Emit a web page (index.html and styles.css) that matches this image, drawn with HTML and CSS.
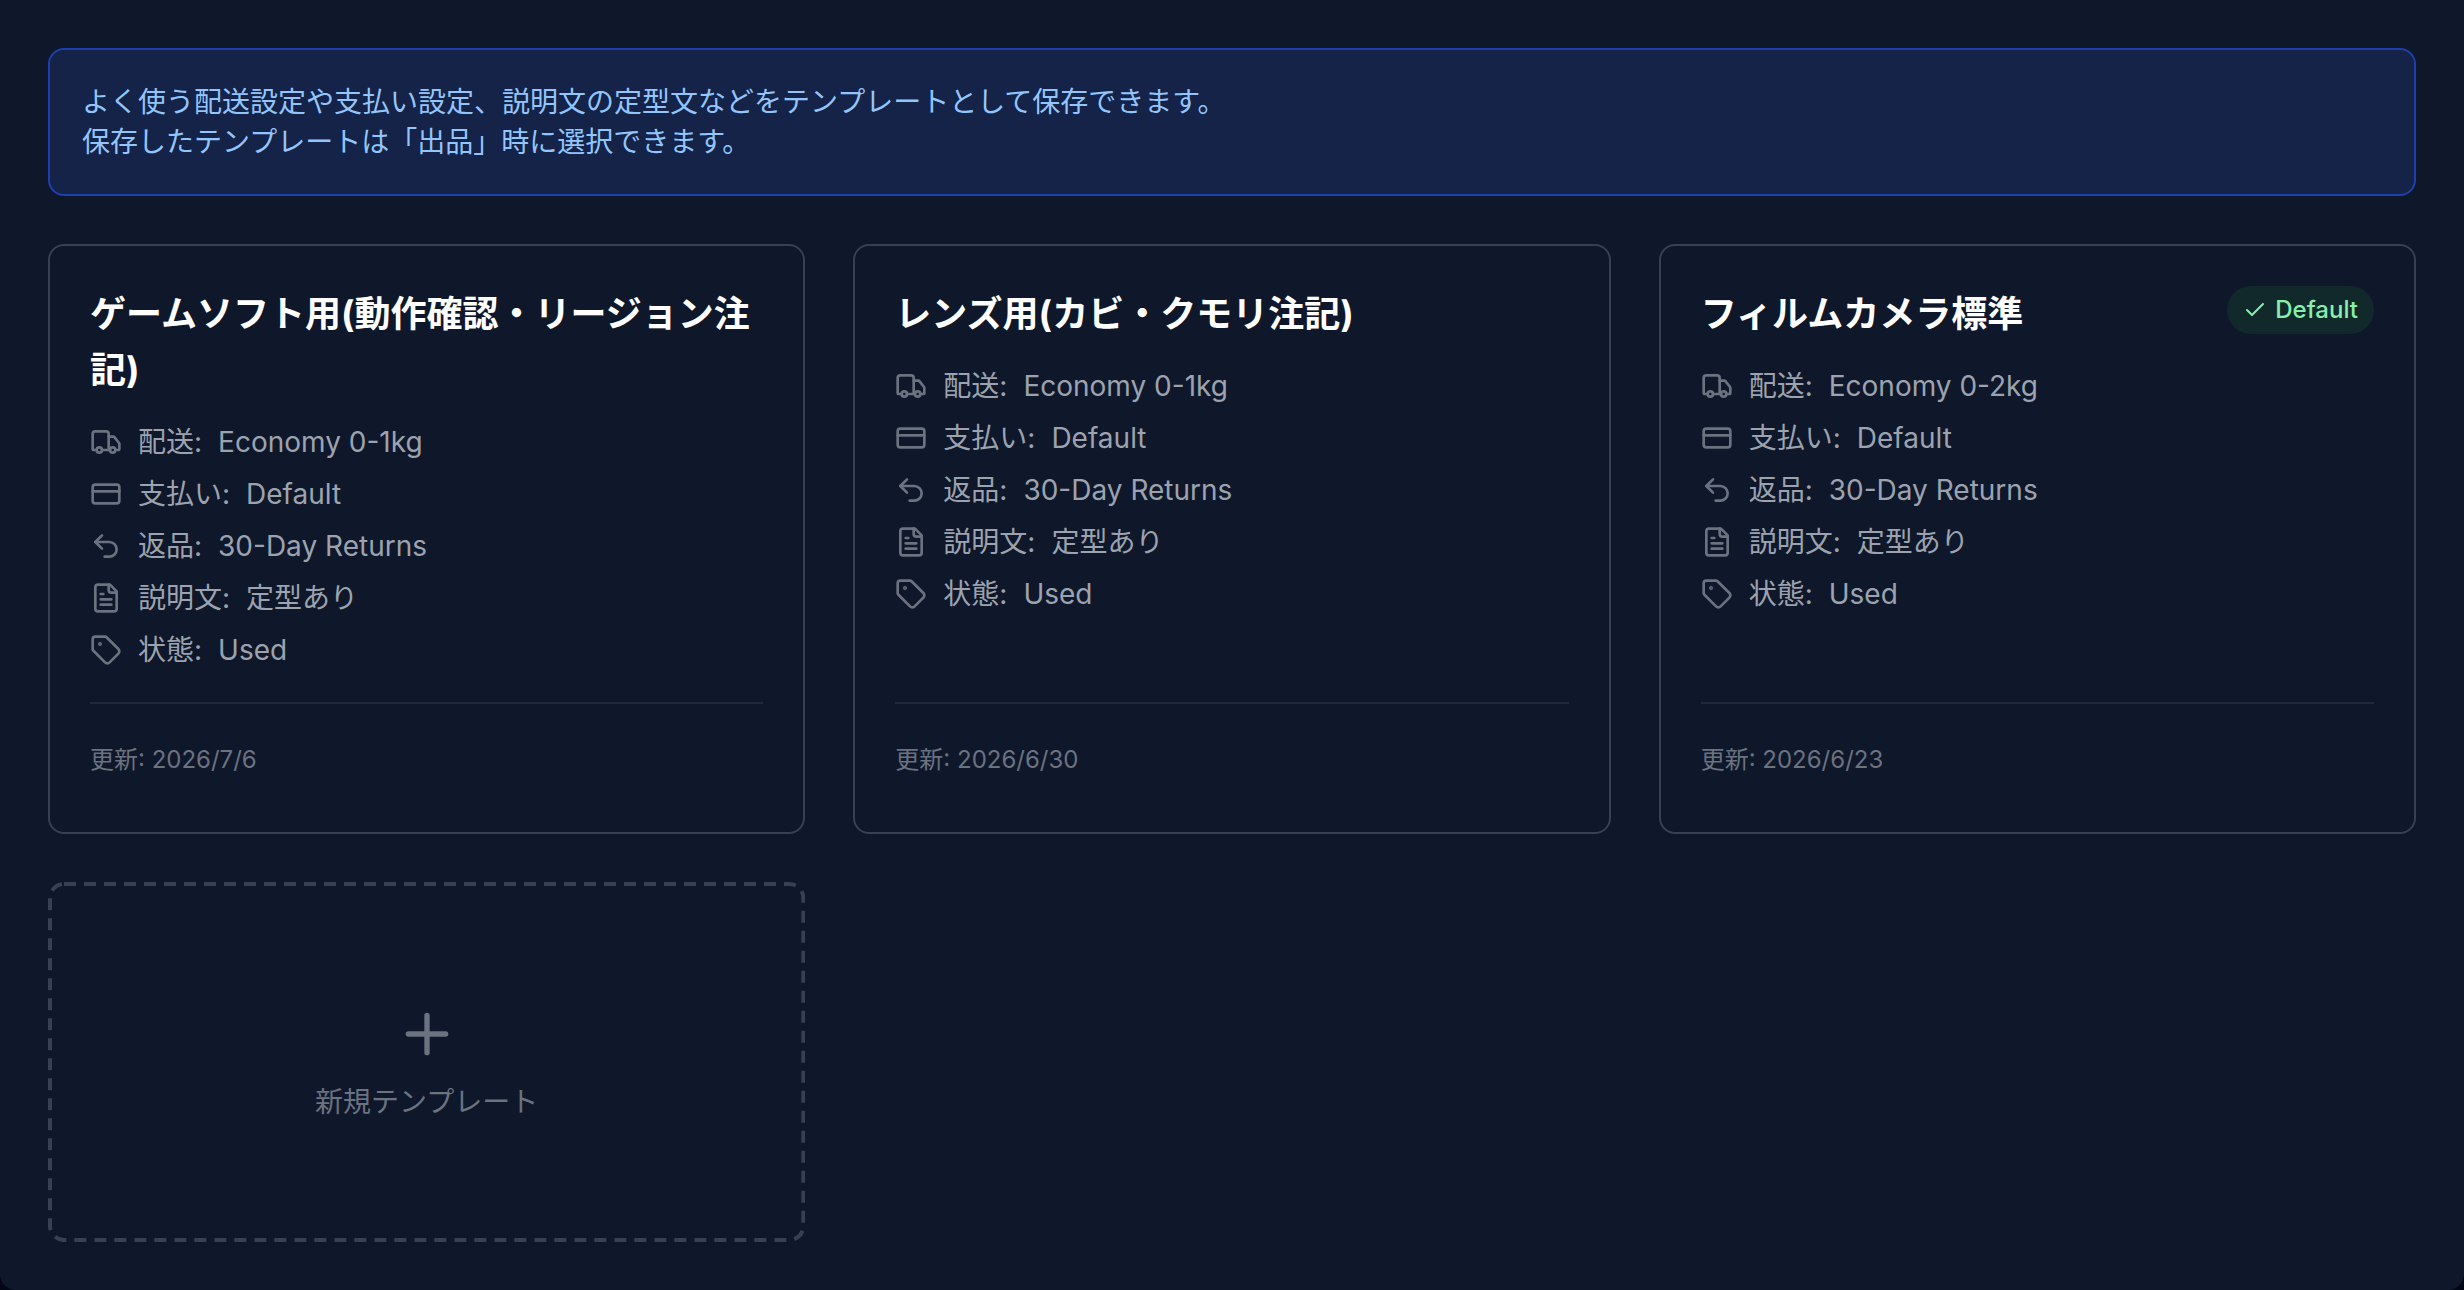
FILE: index.html
```html
<!DOCTYPE html>
<html lang="ja">
<head>
  <meta charset="UTF-8" />
  <meta name="viewport" content="width=device-width, initial-scale=1" />
  <title>テンプレート</title>
  <link rel="stylesheet" href="styles.css">
</head>
<body>

  <!-- Icon set -->
  <svg class="icon-defs" aria-hidden="true">
    <symbol id="icon-truck" viewBox="0 0 24 24">
      <path d="M14 18V6a2 2 0 0 0-2-2H4a2 2 0 0 0-2 2v11a1 1 0 0 0 1 1h2" />
      <path d="M15 18H9" />
      <path d="M19 18h2a1 1 0 0 0 1-1v-3.65a1 1 0 0 0-.22-.624l-3.48-4.35A1 1 0 0 0 17.52 8H14" />
      <circle cx="17" cy="18" r="2" />
      <circle cx="7" cy="18" r="2" />
    </symbol>
    <symbol id="icon-card" viewBox="0 0 24 24">
      <rect x="2" y="5" width="20" height="14" rx="2" />
      <path d="M2 10h20" />
    </symbol>
    <symbol id="icon-return" viewBox="0 0 24 24">
      <path d="M9 14 4 9l5-5" />
      <path d="M4 9h10.5a5.5 5.5 0 0 1 0 11H11" />
    </symbol>
    <symbol id="icon-file" viewBox="0 0 24 24">
      <path d="M15 2H6a2 2 0 0 0-2 2v16a2 2 0 0 0 2 2h12a2 2 0 0 0 2-2V7Z" />
      <path d="M14 2v4a2 2 0 0 0 2 2h4" />
      <path d="M10 9H8M16 13H8M16 17H8" />
    </symbol>
    <symbol id="icon-tag" viewBox="0 0 24 24">
      <path d="M12.586 2.586A2 2 0 0 0 11.172 2H4a2 2 0 0 0-2 2v7.172a2 2 0 0 0 .586 1.414l8.704 8.704a2.426 2.426 0 0 0 3.42 0l6.58-6.58a2.426 2.426 0 0 0 0-3.42z" />
      <circle cx="7.5" cy="7.5" r=".5" fill="currentColor" />
    </symbol>
    <symbol id="icon-check" viewBox="0 0 24 24">
      <path d="M20 6 9 17l-5-5" />
    </symbol>
    <symbol id="icon-plus" viewBox="0 0 24 24">
      <path d="M5 12h14M12 5v14" />
    </symbol>
  </svg>

  <main class="page">
    <div class="notice">
      <p>よく使う配送設定や支払い設定、説明文の定型文などをテンプレートとして保存できます。<br>保存したテンプレートは「出品」時に選択できます。</p>
    </div>

    <div class="template-grid">
      <article class="template-card">
        <div class="card-header">
          <h3 class="card-title">ゲームソフト用(動作確認・リージョン注記)</h3>
        </div>
        <ul class="detail-list">
          <li><svg class="icon"><use href="#icon-truck" /></svg><span>配送:</span><span>Economy 0-1kg</span></li>
          <li><svg class="icon"><use href="#icon-card" /></svg><span>支払い:</span><span>Default</span></li>
          <li><svg class="icon"><use href="#icon-return" /></svg><span>返品:</span><span>30-Day Returns</span></li>
          <li><svg class="icon"><use href="#icon-file" /></svg><span>説明文:</span><span>定型あり</span></li>
          <li><svg class="icon"><use href="#icon-tag" /></svg><span>状態:</span><span>Used</span></li>
        </ul>
        <div class="card-footer">更新: 2026/7/6</div>
      </article>

      <article class="template-card">
        <div class="card-header">
          <h3 class="card-title">レンズ用(カビ・クモリ注記)</h3>
        </div>
        <ul class="detail-list">
          <li><svg class="icon"><use href="#icon-truck" /></svg><span>配送:</span><span>Economy 0-1kg</span></li>
          <li><svg class="icon"><use href="#icon-card" /></svg><span>支払い:</span><span>Default</span></li>
          <li><svg class="icon"><use href="#icon-return" /></svg><span>返品:</span><span>30-Day Returns</span></li>
          <li><svg class="icon"><use href="#icon-file" /></svg><span>説明文:</span><span>定型あり</span></li>
          <li><svg class="icon"><use href="#icon-tag" /></svg><span>状態:</span><span>Used</span></li>
        </ul>
        <div class="card-footer">更新: 2026/6/30</div>
      </article>

      <article class="template-card">
        <div class="card-header">
          <h3 class="card-title">フィルムカメラ標準</h3>
          <span class="badge"><svg class="icon badge-icon"><use href="#icon-check" /></svg>Default</span>
        </div>
        <ul class="detail-list">
          <li><svg class="icon"><use href="#icon-truck" /></svg><span>配送:</span><span>Economy 0-2kg</span></li>
          <li><svg class="icon"><use href="#icon-card" /></svg><span>支払い:</span><span>Default</span></li>
          <li><svg class="icon"><use href="#icon-return" /></svg><span>返品:</span><span>30-Day Returns</span></li>
          <li><svg class="icon"><use href="#icon-file" /></svg><span>説明文:</span><span>定型あり</span></li>
          <li><svg class="icon"><use href="#icon-tag" /></svg><span>状態:</span><span>Used</span></li>
        </ul>
        <div class="card-footer">更新: 2026/6/23</div>
      </article>

      <button class="new-template" type="button">
        <svg class="dashed-frame" aria-hidden="true"><rect x="2" y="2" rx="14" /></svg>
        <svg class="icon plus-icon"><use href="#icon-plus" /></svg>
        <span>新規テンプレート</span>
      </button>
    </div>
  </main>

</body>
</html>
```
FILE: styles.css
```css
* { margin: 0; padding: 0; box-sizing: border-box; }

body {
  font-family: Inter, "Noto Sans CJK JP", sans-serif;
  font-size: 28px;
  line-height: 40px;
  background-color: #020617;
  color: #9ca3af;
}

.icon-defs {
  display: none;
}

.page {
  min-height: 100vh;
  padding: 48px;
  background-color: #0f172a;
  border-radius: 0 0 16px 16px;
}

.notice {
  padding: 32px;
  margin-bottom: 48px;
  border: 2px solid #1e40af;
  border-radius: 16px;
  background-color: #142347;
  color: #93c5fd;
}

.template-grid {
  display: grid;
  grid-template-columns: repeat(3, 1fr);
  gap: 48px;
}

.template-card {
  display: flex;
  flex-direction: column;
  padding: 40px;
  border: 2px solid #374151;
  border-radius: 16px;
}

.card-header {
  display: flex;
  justify-content: space-between;
  align-items: flex-start;
  margin-bottom: 24px;
}

.card-title {
  font-size: 36px;
  line-height: 56px;
  font-weight: 700;
  color: white;
}

.badge {
  display: flex;
  align-items: center;
  gap: 8px;
  padding: 8px 16px;
  border-radius: 24px;
  background-color: #12292c;
  color: #86efac;
  font-size: 24px;
  line-height: 32px;
  font-weight: 500;
}

.icon {
  width: 32px;
  height: 32px;
  flex-shrink: 0;
  fill: none;
  stroke: currentColor;
  stroke-width: 2;
  stroke-linecap: round;
  stroke-linejoin: round;
}

.badge-icon {
  width: 24px;
  height: 24px;
}

.detail-list {
  display: flex;
  flex-direction: column;
  gap: 12px;
  margin-bottom: 32px;
  list-style: none;
}

.detail-list li {
  display: flex;
  align-items: center;
  gap: 16px;
}

.detail-list .icon {
  color: #6b7280;
}

.card-footer {
  margin-top: auto;
  padding-top: 24px;
  border-top: 2px solid #1f2937;
  color: #6b7280;
  font-size: 24px;
  line-height: 64px;
}

.new-template {
  position: relative;
  display: flex;
  flex-direction: column;
  justify-content: center;
  align-items: center;
  gap: 16px;
  min-height: 360px;
  border: none;
  border-radius: 16px;
  background: none;
  color: #6b7280;
  font: inherit;
  cursor: pointer;
}

/* longer dashes than border-style: dashed gives */
.dashed-frame {
  position: absolute;
  inset: 0;
  width: 100%;
  height: 100%;
}

.dashed-frame rect {
  width: calc(100% - 4px);
  height: calc(100% - 4px);
  fill: none;
  stroke: #374151;
  stroke-width: 4;
  stroke-dasharray: 12 8;
}

.plus-icon {
  width: 64px;
  height: 64px;
}
```
